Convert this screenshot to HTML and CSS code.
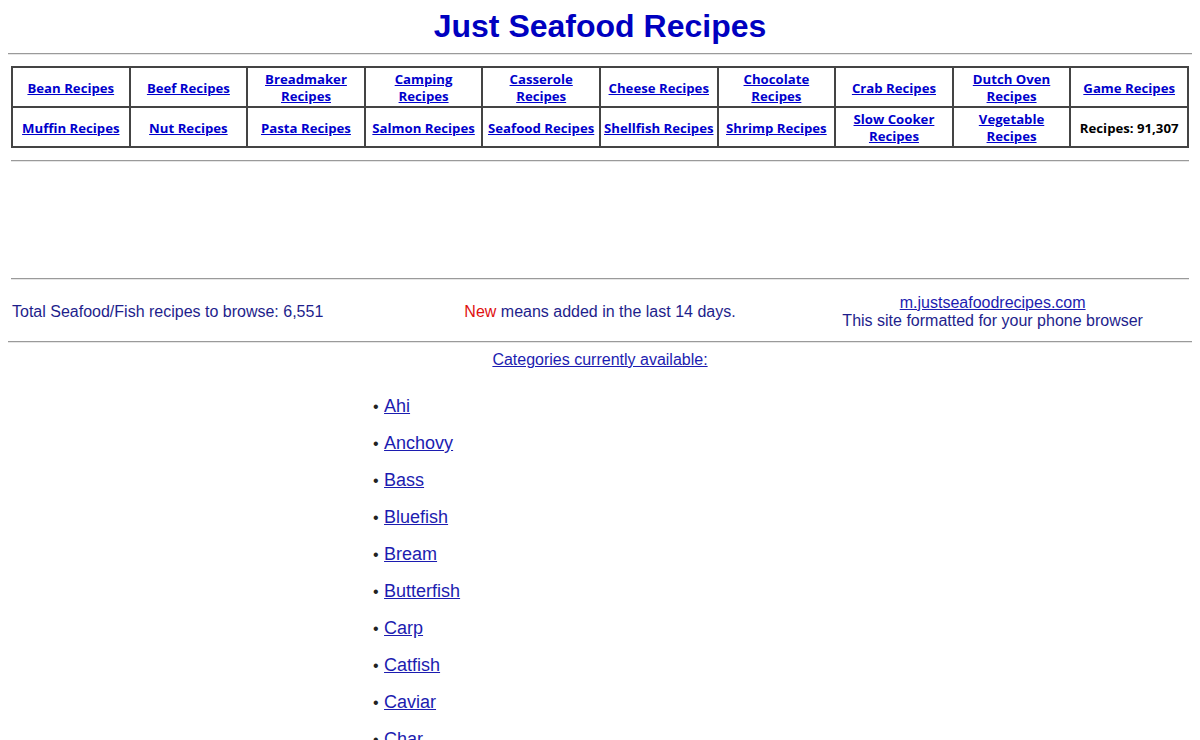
FILE: index.html
```html
<!DOCTYPE html>
<html>
<head>
<meta charset="utf-8">
<title>Just Seafood Recipes</title>
<link rel="stylesheet" href="styles.css">
</head>
<body>
<h1 class="title">Just Seafood Recipes</h1>
<hr class="rule rule-head">
<div class="inset">
<table class="nav">
<tr>
<td><a href="#">Bean Recipes</a></td>
<td><a href="#">Beef Recipes</a></td>
<td><a href="#">Breadmaker Recipes</a></td>
<td><a href="#">Camping Recipes</a></td>
<td><a href="#">Casserole Recipes</a></td>
<td><a href="#">Cheese Recipes</a></td>
<td><a href="#">Chocolate Recipes</a></td>
<td><a href="#">Crab Recipes</a></td>
<td><a href="#">Dutch Oven Recipes</a></td>
<td><a href="#">Game Recipes</a></td>
</tr>
<tr>
<td><a href="#">Muffin Recipes</a></td>
<td><a href="#">Nut Recipes</a></td>
<td><a href="#">Pasta Recipes</a></td>
<td><a href="#">Salmon Recipes</a></td>
<td><a href="#">Seafood Recipes</a></td>
<td><a href="#">Shellfish Recipes</a></td>
<td><a href="#">Shrimp Recipes</a></td>
<td><a href="#">Slow Cooker Recipes</a></td>
<td><a href="#">Vegetable Recipes</a></td>
<td class="count">Recipes: 91,307</td>
</tr>
</table>
<hr class="rule rule-top">
<div class="adspace"></div>
<hr class="rule rule-flat">
<div class="info">
<div class="info-left">Total Seafood/Fish recipes to browse: 6,551</div>
<div class="info-mid"><span class="new">New</span> means added in the last 14 days.</div>
<div class="info-right"><a href="#">m.justseafoodrecipes.com</a><br>This site formatted for your phone browser</div>
</div>
</div>
<hr class="rule rule-flat">
<div class="cats"><a href="#">Categories currently available:</a></div>
<div class="list">
<p class="item">&bull; <a href="#">Ahi</a></p>
<p class="item">&bull; <a href="#">Anchovy</a></p>
<p class="item">&bull; <a href="#">Bass</a></p>
<p class="item">&bull; <a href="#">Bluefish</a></p>
<p class="item">&bull; <a href="#">Bream</a></p>
<p class="item">&bull; <a href="#">Butterfish</a></p>
<p class="item">&bull; <a href="#">Carp</a></p>
<p class="item">&bull; <a href="#">Catfish</a></p>
<p class="item">&bull; <a href="#">Caviar</a></p>
<p class="item">&bull; <a href="#">Char</a></p>
</div>
</body>
</html>
```
FILE: styles.css
```css
html, body {
  background: #ffffff;
}
body {
  margin: 0;
  padding: 8px 8px 0;
  font-family: "Liberation Sans", Arial, sans-serif;
  color: #1e1e8c;
}
.title {
  margin: 0;
  font-size: 32px;
  line-height: 37px;
  font-weight: bold;
  text-align: center;
  color: #0000c0;
}
.rule {
  margin: 0;
  height: 0;
  border: 0;
  border-top: 1px solid #9a9a9a;
  border-bottom: 1px solid #e6e6e6;
}
.rule-head {
  margin-top: 8px;
}
.rule-top {
  margin-top: 12px;
}
.inset {
  margin: 0 3px;
}
.nav {
  margin-top: 11px;
  width: 100%;
  border-collapse: collapse;
  table-layout: fixed;
  font-family: "Open Sans", sans-serif;
  font-size: 13.2px;
  font-weight: bold;
  line-height: 17px;
}
.nav td {
  border: 2px solid #444444;
  text-align: center;
  padding: 3px 3px 1px;
  height: 34px;
}
.nav a {
  color: #0000cc;
}
.nav .count {
  color: #000000;
}
.adspace {
  height: 116px;
}
.info {
  display: grid;
  grid-template-columns: 1fr 1fr 1fr;
  align-items: center;
  padding: 14px 0 11px;
  font-size: 16px;
  line-height: 18px;
}
.info-left {
  padding-left: 1px;
}
.info-mid, .info-right {
  text-align: center;
}
.info a {
  color: #1c1cb0;
}
.new {
  color: #e01010;
}
.cats {
  text-align: center;
  font-size: 16px;
  line-height: 18px;
  margin-top: 8px;
}
.cats a, .list a {
  color: #1c1cb0;
}
.list {
  width: 454px;
  margin: 27px auto 0;
}
.item {
  margin: 16px 0;
  font-size: 16px;
  line-height: 21px;
  color: #222222;
}
.item a {
  font-size: 18px;
  margin-left: 1px;
}
```
